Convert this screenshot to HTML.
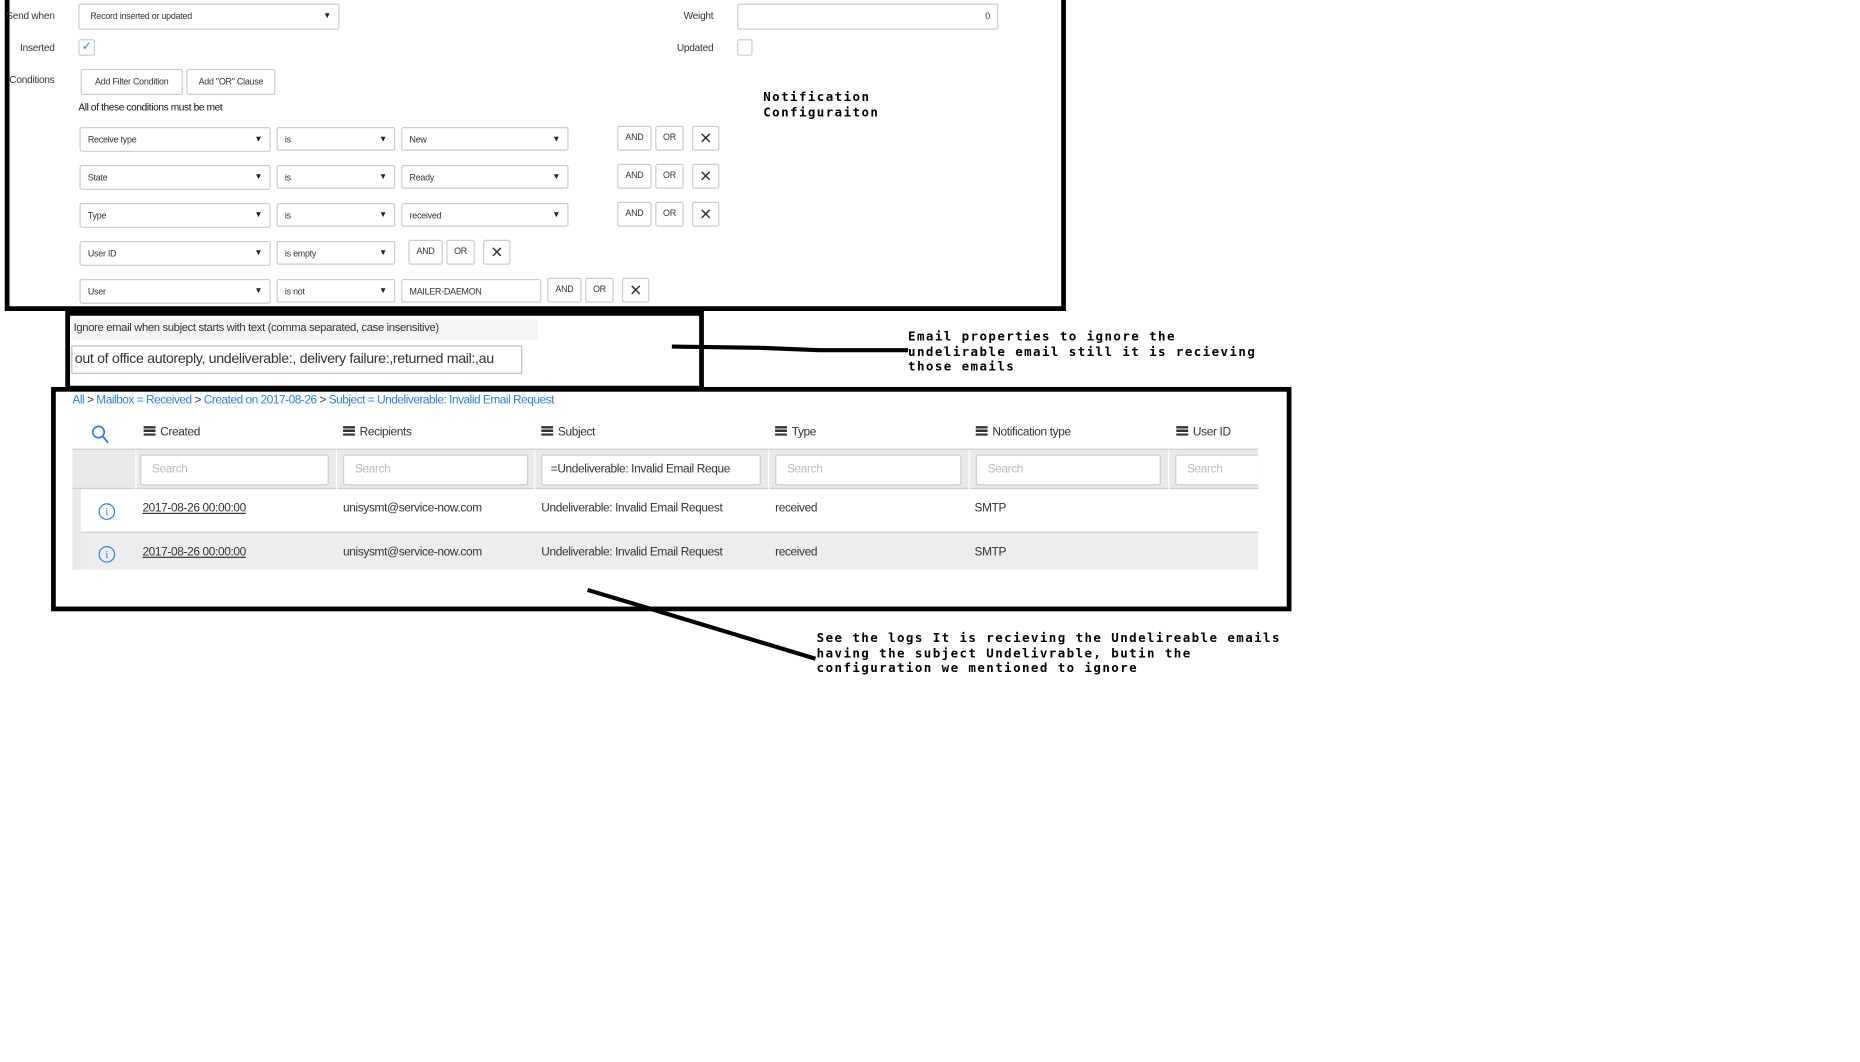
<!DOCTYPE html>
<html><head><meta charset="utf-8">
<style>
html,body{margin:0;padding:0;background:#fff;width:1860px;height:1062px;overflow:hidden}
#w{position:absolute;left:0;top:0;width:1568px;height:895px;transform:scale(1.187);transform-origin:0 0;font-family:"Liberation Sans Narrow","Liberation Sans",sans-serif;color:#333}
.a{position:absolute}
.box{position:absolute;border:4px solid #000;box-sizing:border-box}
.lbl{position:absolute;font-size:8.5px;color:#333;text-align:right;letter-spacing:-0.2px}
.inp{position:absolute;border:1px solid #ccc;border-radius:2px;box-sizing:border-box;background:#fff;font-size:7.5px;padding-left:6px;line-height:19px;color:#333;letter-spacing:-0.2px}
.sel:after{content:"\25BC";position:absolute;right:6px;top:0;font-size:7px;color:#222}
.btn{position:absolute;border:1px solid #ccc;border-radius:2px;box-sizing:border-box;font-size:7.5px;text-align:center;line-height:18px;background:#fff;color:#333;letter-spacing:-0.2px}
.x{font-size:13px;line-height:19px}
.mono{position:absolute;font-family:"DejaVu Sans Mono","Liberation Mono",monospace;font-weight:bold;font-size:10.5px;letter-spacing:1.2px;line-height:12.7px;color:#000;white-space:pre}
.hd{position:absolute;top:359px;font-size:10px;color:#333;letter-spacing:-0.3px}
.hd:before{content:"";display:inline-block;width:10px;height:8px;margin-right:4px;vertical-align:-0px;background:linear-gradient(#333 0 2px,transparent 2px 3px,#333 3px 5px,transparent 5px 6px,#333 6px 8px)}
.srch{position:absolute;top:383px;height:26px;border:1px solid #ccc;border-radius:2px;box-sizing:border-box;background:#fff;font-size:10px;color:#bbb;padding-left:9px;line-height:24px;letter-spacing:-0.3px}
.cell{position:absolute;font-size:10px;color:#333;letter-spacing:-0.3px}
.info{position:absolute;width:12px;height:12px;border:1.3px solid #2f7de1;border-radius:50%;color:#2f7de1;font-size:9px;text-align:center;line-height:12px;font-family:"Liberation Serif",serif}
</style></head><body>
<div id="w">
<div class="box" style="left:4px;top:-4px;width:894px;height:266px"></div>
<div class="lbl" style="left:0;top:8px;width:46px">Send when</div>
<div class="inp sel" style="left:66px;top:3px;width:220px;height:22px;line-height:20px;padding-left:9px">Record inserted or updated</div>
<div class="lbl" style="left:540px;top:8px;width:61px">Weight</div>
<div class="inp" style="left:621px;top:3px;width:220px;height:22px;text-align:right;padding-right:6px;line-height:20px">0</div>
<div class="lbl" style="left:0;top:35px;width:46px">Inserted</div>
<div class="inp" style="left:66px;top:33px;width:14px;height:14px;padding:0;color:#2f7de1;font-size:10px;line-height:12px;text-align:center">✓</div>
<div class="lbl" style="left:540px;top:35px;width:61px">Updated</div>
<div class="inp" style="left:621px;top:33px;width:13px;height:14px;padding:0"></div>
<div class="lbl" style="left:0;top:62px;width:46px">Conditions</div>
<div class="btn" style="left:68px;top:58px;width:86px;height:22px;line-height:20px">Add Filter Condition</div>
<div class="btn" style="left:157px;top:58px;width:75px;height:22px;line-height:20px">Add "OR" Clause</div>
<div class="a" style="left:66px;top:85px;font-size:8.5px;color:#111;letter-spacing:-0.3px">All of these conditions must be met</div>

<div class="inp sel" style="left:67px;top:107px;width:161px;height:21px">Receive type</div>
<div class="inp sel" style="left:233px;top:107px;width:100px;height:20px">is</div>
<div class="inp sel" style="left:338px;top:107px;width:141px;height:20px">New</div>
<div class="btn" style="left:520px;top:106px;width:29px;height:21px">AND</div>
<div class="btn" style="left:552px;top:106px;width:24px;height:21px">OR</div>
<div class="btn x" style="left:583px;top:106px;width:23px;height:21px">✕</div>

<div class="inp sel" style="left:67px;top:139px;width:161px;height:21px">State</div>
<div class="inp sel" style="left:233px;top:139px;width:100px;height:20px">is</div>
<div class="inp sel" style="left:338px;top:139px;width:141px;height:20px">Ready</div>
<div class="btn" style="left:520px;top:138px;width:29px;height:21px">AND</div>
<div class="btn" style="left:552px;top:138px;width:24px;height:21px">OR</div>
<div class="btn x" style="left:583px;top:138px;width:23px;height:21px">✕</div>

<div class="inp sel" style="left:67px;top:171px;width:161px;height:21px">Type</div>
<div class="inp sel" style="left:233px;top:171px;width:100px;height:20px">is</div>
<div class="inp sel" style="left:338px;top:171px;width:141px;height:20px">received</div>
<div class="btn" style="left:520px;top:170px;width:29px;height:21px">AND</div>
<div class="btn" style="left:552px;top:170px;width:24px;height:21px">OR</div>
<div class="btn x" style="left:583px;top:170px;width:23px;height:21px">✕</div>

<div class="inp sel" style="left:67px;top:203px;width:161px;height:21px">User ID</div>
<div class="inp sel" style="left:233px;top:203px;width:100px;height:20px">is empty</div>
<div class="btn" style="left:344px;top:202px;width:29px;height:21px">AND</div>
<div class="btn" style="left:376px;top:202px;width:24px;height:21px">OR</div>
<div class="btn x" style="left:407px;top:202px;width:23px;height:21px">✕</div>

<div class="inp sel" style="left:67px;top:235px;width:161px;height:21px">User</div>
<div class="inp sel" style="left:233px;top:235px;width:100px;height:20px">is not</div>
<div class="inp" style="left:338px;top:235px;width:118px;height:20px">MAILER-DAEMON</div>
<div class="btn" style="left:461px;top:234px;width:29px;height:21px">AND</div>
<div class="btn" style="left:493px;top:234px;width:24px;height:21px">OR</div>
<div class="btn x" style="left:524px;top:234px;width:23px;height:21px">✕</div>

<div class="mono" style="left:643px;top:76px">Notification
Configuraiton</div>

<div class="box" style="left:55px;top:261px;width:538px;height:68px;border-top-width:5px"></div>
<div class="a" style="left:60px;top:269px;width:393px;height:17px;background:#f4f4f4;font-size:9.5px;line-height:16px;padding-left:2px;box-sizing:border-box;letter-spacing:-0.3px">Ignore email when subject starts with text (comma separated, case insensitive)</div>
<div class="a" style="left:60px;top:291px;width:380px;height:24px;border:1px solid #bbb;box-sizing:border-box;font-size:12px;line-height:21px;padding-left:2px;overflow:hidden;white-space:nowrap;letter-spacing:-0.3px">out of office autoreply, undeliverable:, delivery failure:,returned mail:,au</div>

<svg class="a" style="left:0;top:0" width="1568" height="895">
<path d="M566 292 L640 293 L690 295 L765 295" stroke="#000" stroke-width="3.5" fill="none"/>
<path d="M495 497 L545 512 L687 555" stroke="#000" stroke-width="3.5" fill="none"/>
</svg>
<div class="mono" style="left:765px;top:278px">Email properties to ignore the
undelirable email still it is recieving
those emails</div>

<div class="box" style="left:43px;top:326px;width:1045px;height:189px"></div>
<div class="a" style="left:61px;top:332px;font-size:10px;color:#2f7de1;white-space:nowrap;letter-spacing:-0.4px">All <span style="color:#333">&gt;</span> Mailbox = Received <span style="color:#333">&gt;</span> Created on 2017-08-26 <span style="color:#333">&gt;</span> Subject = Undeliverable: Invalid Email Request</div>
<svg class="a" style="left:77px;top:358px" width="16" height="17"><circle cx="6" cy="6" r="4.8" stroke="#2f7de1" stroke-width="1.4" fill="none"/><path d="M9.5 9.5 L14 15" stroke="#2f7de1" stroke-width="1.5"/></svg>
<div class="hd" style="left:121px">Created</div>
<div class="hd" style="left:289px">Recipients</div>
<div class="hd" style="left:456px">Subject</div>
<div class="hd" style="left:653px">Type</div>
<div class="hd" style="left:822px">Notification type</div>
<div class="hd" style="left:991px">User ID</div>
<div class="a" style="left:61px;top:378px;width:999px;height:34px;background:#e8e9eb;border-top:1px solid #ccc;border-bottom:1px solid #ccc;box-sizing:border-box"></div>
<div class="a" style="left:114px;top:379px;width:1px;height:33px;background:#fff"></div>
<div class="a" style="left:283px;top:379px;width:1px;height:33px;background:#fff"></div>
<div class="a" style="left:450px;top:379px;width:1px;height:33px;background:#fff"></div>
<div class="a" style="left:647px;top:379px;width:1px;height:33px;background:#fff"></div>
<div class="a" style="left:816px;top:379px;width:1px;height:33px;background:#fff"></div>
<div class="a" style="left:984px;top:379px;width:1px;height:33px;background:#fff"></div>
<div class="srch" style="left:118px;width:159px">Search</div>
<div class="srch" style="left:289px;width:156px">Search</div>
<div class="srch" style="left:456px;width:185px;color:#333;padding-left:7px;white-space:nowrap;overflow:hidden">=Undeliverable: Invalid Email Reque</div>
<div class="srch" style="left:653px;width:157px">Search</div>
<div class="srch" style="left:822px;width:156px">Search</div>
<div class="srch" style="left:990px;width:70px;border-right:none;border-radius:2px 0 0 2px">Search</div>

<div class="a" style="left:61px;top:412px;width:7px;height:68px;background:#e8e9eb"></div>
<div class="a" style="left:68px;top:448px;width:992px;height:32px;background:#ededed;border-top:1px solid #ccc;box-sizing:border-box"></div>
<div class="info" style="left:83px;top:424px">i</div>
<div class="info" style="left:83px;top:460px">i</div>
<div class="cell" style="left:120px;top:423px;text-decoration:underline">2017-08-26 00:00:00</div>
<div class="cell" style="left:289px;top:423px">unisysmt@service-now.com</div>
<div class="cell" style="left:456px;top:423px">Undeliverable: Invalid Email Request</div>
<div class="cell" style="left:653px;top:423px">received</div>
<div class="cell" style="left:821px;top:423px">SMTP</div>
<div class="cell" style="left:120px;top:460px;text-decoration:underline">2017-08-26 00:00:00</div>
<div class="cell" style="left:289px;top:460px">unisysmt@service-now.com</div>
<div class="cell" style="left:456px;top:460px">Undeliverable: Invalid Email Request</div>
<div class="cell" style="left:653px;top:460px">received</div>
<div class="cell" style="left:821px;top:460px">SMTP</div>

<div class="mono" style="left:688px;top:532px">See the logs It is recieving the Undelireable emails
having the subject Undelivrable, butin the
configuration we mentioned to ignore</div>
</div>
</body></html>
